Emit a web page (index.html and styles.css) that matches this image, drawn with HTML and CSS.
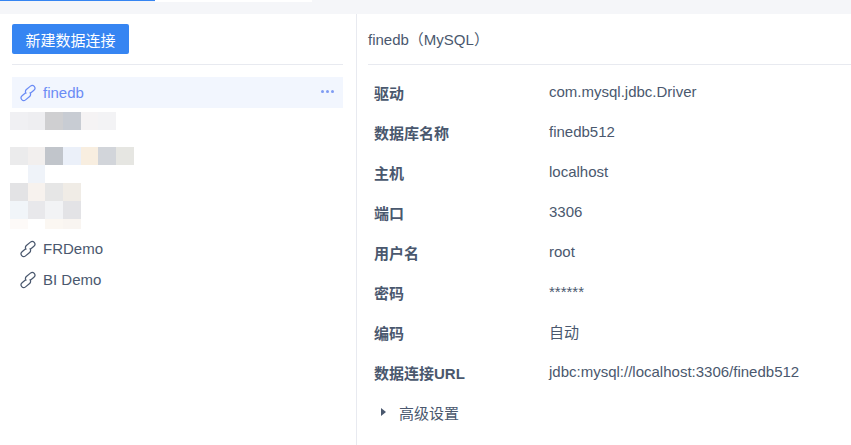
FILE: index.html
```html
<!DOCTYPE html>
<html lang="zh">
<head>
<meta charset="utf-8">
<title>数据连接</title>
<link rel="stylesheet" href="styles.css">
</head>
<body>
<svg class="defs" width="0" height="0" aria-hidden="true">
  <symbol id="link" viewBox="0 0 18 18">
    <g fill="none" stroke="currentColor" stroke-width="1.25" transform="translate(9 9) rotate(-40)">
      <path d="M-1.7-.6A2.7 2.7 0 0 1 1-3.7H6.3A2.7 2.7 0 0 1 6.3 1.7H1.6"/>
      <path d="M1.7.6A2.7 2.7 0 0 1-1 3.7H-6.3A2.7 2.7 0 0 1-6.3-1.7H-1.6"/>
    </g>
  </symbol>
</svg>
<div class="tabs">
  <div class="tab tab-active"></div>
  <div class="tab tab-white"></div>
</div>
<main class="main">
  <aside class="side">
    <button class="btn">新建数据连接</button>
    <div class="side-rule"></div>
    <div class="item item-active">
      <svg class="icon"><use href="#link"/></svg>
      <span class="item-name">finedb</span>
      <span class="more"><i></i><i></i><i></i></span>
    </div>
    <div class="mosaic mosaic-a">
      <div class="m-row"><b class="c1"></b><b class="c2"></b><b class="c3"></b><b class="c4"></b><b class="c5"></b><b class="c6"></b></div>
    </div>
    <div class="mosaic mosaic-b">
      <div class="m-row"><b class="d1"></b><b class="d2"></b><b class="d3"></b><b class="d4"></b><b class="d5"></b><b class="d6"></b><b class="d7"></b></div>
      <div class="m-row"><b></b><b class="e2"></b></div>
      <div class="m-row"><b class="f1"></b><b class="f2"></b><b class="f3"></b><b class="f4"></b></div>
      <div class="m-row"><b class="g1"></b><b class="g2"></b><b class="g3"></b><b class="g4"></b></div>
      <div class="m-row m-short"><b class="h1"></b><b></b><b class="h3"></b><b class="h4"></b></div>
    </div>
    <div class="item item-first">
      <svg class="icon"><use href="#link"/></svg>
      <span class="item-name">FRDemo</span>
    </div>
    <div class="item">
      <svg class="icon"><use href="#link"/></svg>
      <span class="item-name">BI Demo</span>
    </div>
  </aside>
  <section class="detail">
    <h1 class="title">finedb（MySQL）</h1>
    <div class="rows">
      <div class="row"><span class="label">驱动</span><span class="value">com.mysql.jdbc.Driver</span></div>
      <div class="row"><span class="label">数据库名称</span><span class="value">finedb512</span></div>
      <div class="row"><span class="label">主机</span><span class="value">localhost</span></div>
      <div class="row"><span class="label">端口</span><span class="value">3306</span></div>
      <div class="row"><span class="label">用户名</span><span class="value">root</span></div>
      <div class="row"><span class="label">密码</span><span class="value">******</span></div>
      <div class="row"><span class="label">编码</span><span class="value">自动</span></div>
      <div class="row"><span class="label">数据连接URL</span><span class="value">jdbc:mysql://localhost:3306/finedb512</span></div>
    </div>
    <div class="advanced"><span class="caret"></span><span>高级设置</span></div>
  </section>
</main>
</body>
</html>
```
FILE: styles.css
```css
* { box-sizing: border-box; }
html, body { margin: 0; height: 100%; overflow: hidden; }
body {
  background: #fff;
  color: #4a586e;
  font-family: "Liberation Sans", "Noto Sans CJK SC", sans-serif;
  font-size: 15px;
}
.defs { position: absolute; }
.tabs { display: flex; height: 14px; background: #f5f6f9; }
.tab { height: 2px; }
.tab-active { height: 1px; background: #3685f2; width: 155px; }
.tab-white { background: #fff; width: 157px; }
.main { display: flex; height: 431px; }
.side {
  width: 357px;
  padding: 10px 13px 0 12px;
  border-right: 1px solid #e8eaf0;
}
.btn {
  display: block;
  width: 117px;
  height: 30px;
  padding: 0;
  border: 0;
  border-radius: 2px;
  background: #3685f2;
  color: #fff;
  font: inherit;
}
.side-rule { height: 1px; margin: 10px 0 12px; background: #e8eaf0; }
.item {
  display: flex;
  align-items: center;
  height: 31px;
  padding: 0 9px 0 7px;
}
.item-active { background: #f2f6fe; color: #6b8cf5; }
.icon { width: 18px; height: 18px; margin-right: 6px; flex: none; }
.item-name { flex: 1; }
.more { display: flex; gap: 2px; padding-bottom: 3px; }
.more i { width: 3px; height: 3px; border-radius: 50%; background: #7f9cf3; }
.mosaic { margin-left: -2px; }
.mosaic-a { margin-top: 4px; }
.mosaic-b { margin-top: 17px; }
.m-row { display: flex; height: 18px; }
.m-short { height: 10px; }
.m-row b { width: 17.7px; }
.c1 { background: #f0f0f3; } .c2 { background: #eeeef1; } .c3 { background: #cfcfd1; }
.c4 { background: #c8ccd3; } .c5 { background: #f5f3f4; } .c6 { background: #f3f3f5; }
.d1 { background: #ebebec; } .d2 { background: #f2efee; } .d3 { background: #c1c5cb; }
.d4 { background: #ebf0f9; } .d5 { background: #f8eee0; } .d6 { background: #d2d5da; } .d7 { background: #e6e6e2; }
.e2 { background: #eff3f9; }
.f1 { background: #e3e3e5; } .f2 { background: #f7f2ee; } .f3 { background: #e6e6e6; } .f4 { background: #f0ece6; }
.g1 { background: #f1f5f9; } .g2 { background: #e8e8eb; } .g3 { background: #f2f3f5; } .g4 { background: #e3e3e6; }
.h1 { background: #fdfaf8; } .h3 { background: #fbf7f2; } .h4 { background: #f9f5f1; }
.item-first { margin-top: 4px; }
.detail { flex: 1; padding: 0 0 0 11px; }
.title {
  height: 51px;
  margin: 0;
  border-bottom: 1px solid #e8eaf0;
  font-size: 15px;
  font-weight: 400;
  line-height: 51px;
}
.rows { padding: 6px 0 0 6px; }
.row { display: flex; height: 40px; align-items: center; }
.label { width: 175px; font-weight: 700; padding-top: 2px; }
.value { margin-top: 1px; }
.advanced { display: flex; align-items: center; height: 42px; padding-left: 13px; }
.caret {
  width: 0;
  height: 0;
  margin-right: 13px;
  border-left: 5px solid #4a586e;
  border-top: 4px solid transparent;
  border-bottom: 4px solid transparent;
}
```
